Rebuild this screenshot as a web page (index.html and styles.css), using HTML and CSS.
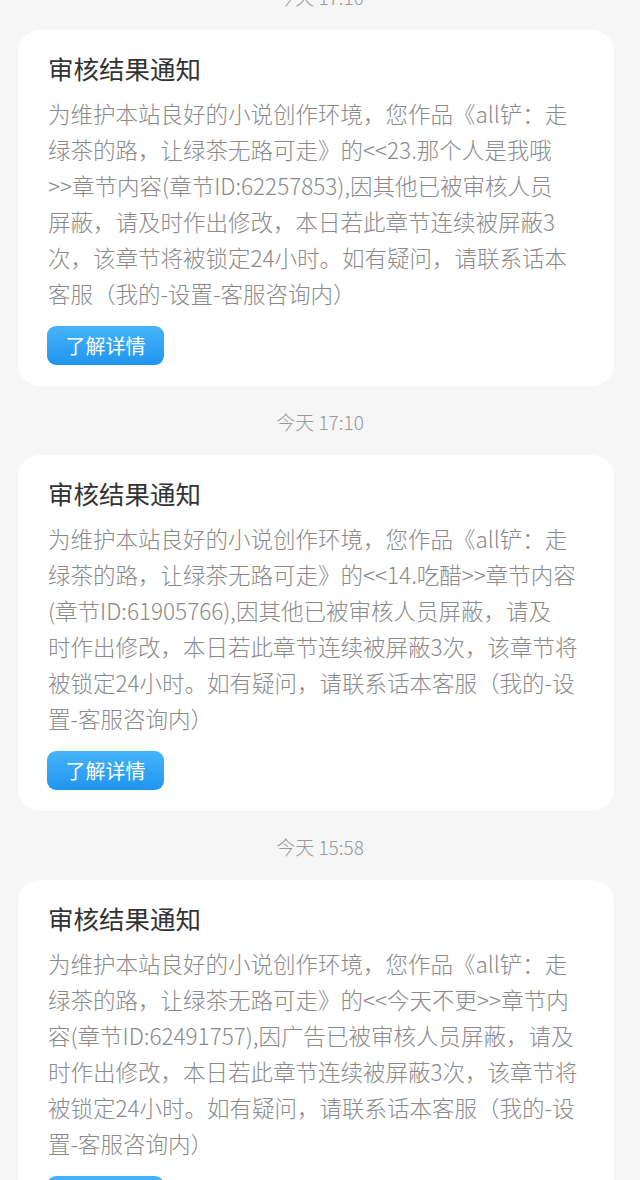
FILE: index.html
```html
<!DOCTYPE html>
<html lang="zh-CN">
<head>
<meta charset="utf-8">
<title>消息通知</title>
<link rel="stylesheet" href="styles.css">
</head>
<body>
<main class="feed">
  <div class="time">今天 17:10</div>
  <section class="card">
    <h2 class="card-title">审核结果通知</h2>
    <p class="card-body">为维护本站良好的小说创作环境，您作品《all铲：走<br>绿茶的路，让绿茶无路可走》的&lt;&lt;23.那个人是我哦<br>&gt;&gt;章节内容(章节ID:62257853),因其他已被审核人员<br>屏蔽，请及时作出修改，本日若此章节连续被屏蔽3<br>次，该章节将被锁定24小时。如有疑问，请联系话本<br>客服（我的-设置-客服咨询内）</p>
    <a class="btn">了解详情</a>
  </section>

  <div class="time">今天 17:10</div>
  <section class="card">
    <h2 class="card-title">审核结果通知</h2>
    <p class="card-body">为维护本站良好的小说创作环境，您作品《all铲：走<br>绿茶的路，让绿茶无路可走》的&lt;&lt;14.吃醋&gt;&gt;章节内容<br>(章节ID:61905766),因其他已被审核人员屏蔽，请及<br>时作出修改，本日若此章节连续被屏蔽3次，该章节将<br>被锁定24小时。如有疑问，请联系话本客服（我的-设<br>置-客服咨询内）</p>
    <a class="btn">了解详情</a>
  </section>

  <div class="time">今天 15:58</div>
  <section class="card">
    <h2 class="card-title">审核结果通知</h2>
    <p class="card-body">为维护本站良好的小说创作环境，您作品《all铲：走<br>绿茶的路，让绿茶无路可走》的&lt;&lt;今天不更&gt;&gt;章节内<br>容(章节ID:62491757),因广告已被审核人员屏蔽，请及<br>时作出修改，本日若此章节连续被屏蔽3次，该章节将<br>被锁定24小时。如有疑问，请联系话本客服（我的-设<br>置-客服咨询内）</p>
    <a class="btn">了解详情</a>
  </section>
</main>
</body>
</html>
```

FILE: styles.css
```css
html, body {
  margin: 0;
  padding: 0;
  background: #f7f6f7;
}

body {
  font-family: "Noto Sans CJK SC", "Noto Sans", sans-serif;
  overflow: hidden;
}

.feed {
  margin-top: -39px;
  display: flex;
  flex-direction: column;
}

.time {
  padding: 18px 0 15px;
  line-height: 36px;
  height: 36px;
  text-align: center;
  font-size: 19px;
  font-weight: 300;
  color: #999999;
}

.card {
  margin-left: 18px;
  width: 596px;
  box-sizing: border-box;
  background: #ffffff;
  border-radius: 22px;
  padding: 20px 30px 21px;
}

.card-title {
  margin: 0;
  font-size: 25.5px;
  font-weight: 400;
  line-height: 36px;
  color: #333333;
}

.card-body {
  margin: 9px 0 0;
  font-size: 22.5px;
  font-weight: 300;
  line-height: 36px;
  color: #8a8a8a;
  white-space: nowrap;
}

.btn {
  margin-top: 15px;
  margin-left: -1px;
  display: flex;
  align-items: center;
  justify-content: center;
  width: 117px;
  height: 39px;
  border-radius: 9px;
  background: linear-gradient(180deg, #46b4fa 0%, #2095ee 100%);
  color: #ffffff;
  font-size: 20px;
  text-decoration: none;
}
```
